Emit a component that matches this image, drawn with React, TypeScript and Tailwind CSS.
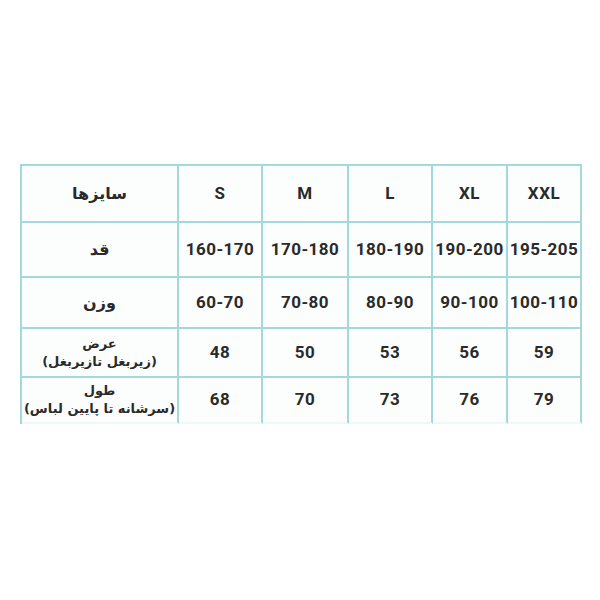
const sizes = ['S', 'M', 'L', 'XL', 'XXL'];

const rows: { label: string; sub?: string; values: string[]; h: string }[] = [
  { label: 'قد', values: ['160-170', '170-180', '180-190', '190-200', '195-205'], h: 'h-[55px]' },
  { label: 'وزن', values: ['60-70', '70-80', '80-90', '90-100', '100-110'], h: 'h-[51px]' },
  { label: 'عرض', sub: '(زیربغل تازیربغل)', values: ['48', '50', '53', '56', '59'], h: 'h-[49px]' },
  { label: 'طول', sub: '(سرشانه تا پایین لباس)', values: ['68', '70', '73', '76', '79'], h: 'h-[46px]' },
];

const cell = 'flex items-center justify-center border-r-2 border-b-2 border-[#a3d9dc] bg-[#fcfefe]';
const fa = "font-['DejaVu_Sans',sans-serif] font-bold text-[#2a2a2a]";
const num = "font-['Roboto',sans-serif] font-bold text-[17px] tracking-[0.5px] text-[#2a2a2a]";

export default function App() {
  return (
    <div className="w-[600px] h-[600px] bg-white pt-[164px] pl-[20px]">
      <div className="w-[562px] grid grid-cols-[157px_84px_86px_84px_75px_74px] border-l-2 border-t-2 border-[#a3d9dc]">
        <div className={`${cell} h-[57px]`}>
          <span dir="rtl" className={`${fa} text-[16px]`}>سایزها</span>
        </div>
        {sizes.map((s) => (
          <div key={s} className={`${cell} h-[57px]`}>
            <span className={num}>{s}</span>
          </div>
        ))}
        {rows.map((r, i) => {
          const last = i === rows.length - 1;
          const c = `${cell} ${r.h} ${last ? 'border-b-[#eef8f8]' : ''}`;
          return [
            <div key={r.label} className={`${c} flex-col leading-[18px]`}>
              <span dir="rtl" className={`${fa} ${r.sub ? 'text-[13px]' : 'text-[16px]'}`}>{r.label}</span>
              {r.sub && <span dir="rtl" className={`${fa} text-[13px]`}>{r.sub}</span>}
            </div>,
            ...r.values.map((v, j) => (
              <div key={r.label + j} className={c}>
                <span className={num}>{v}</span>
              </div>
            )),
          ];
        })}
      </div>
    </div>
  );
}
